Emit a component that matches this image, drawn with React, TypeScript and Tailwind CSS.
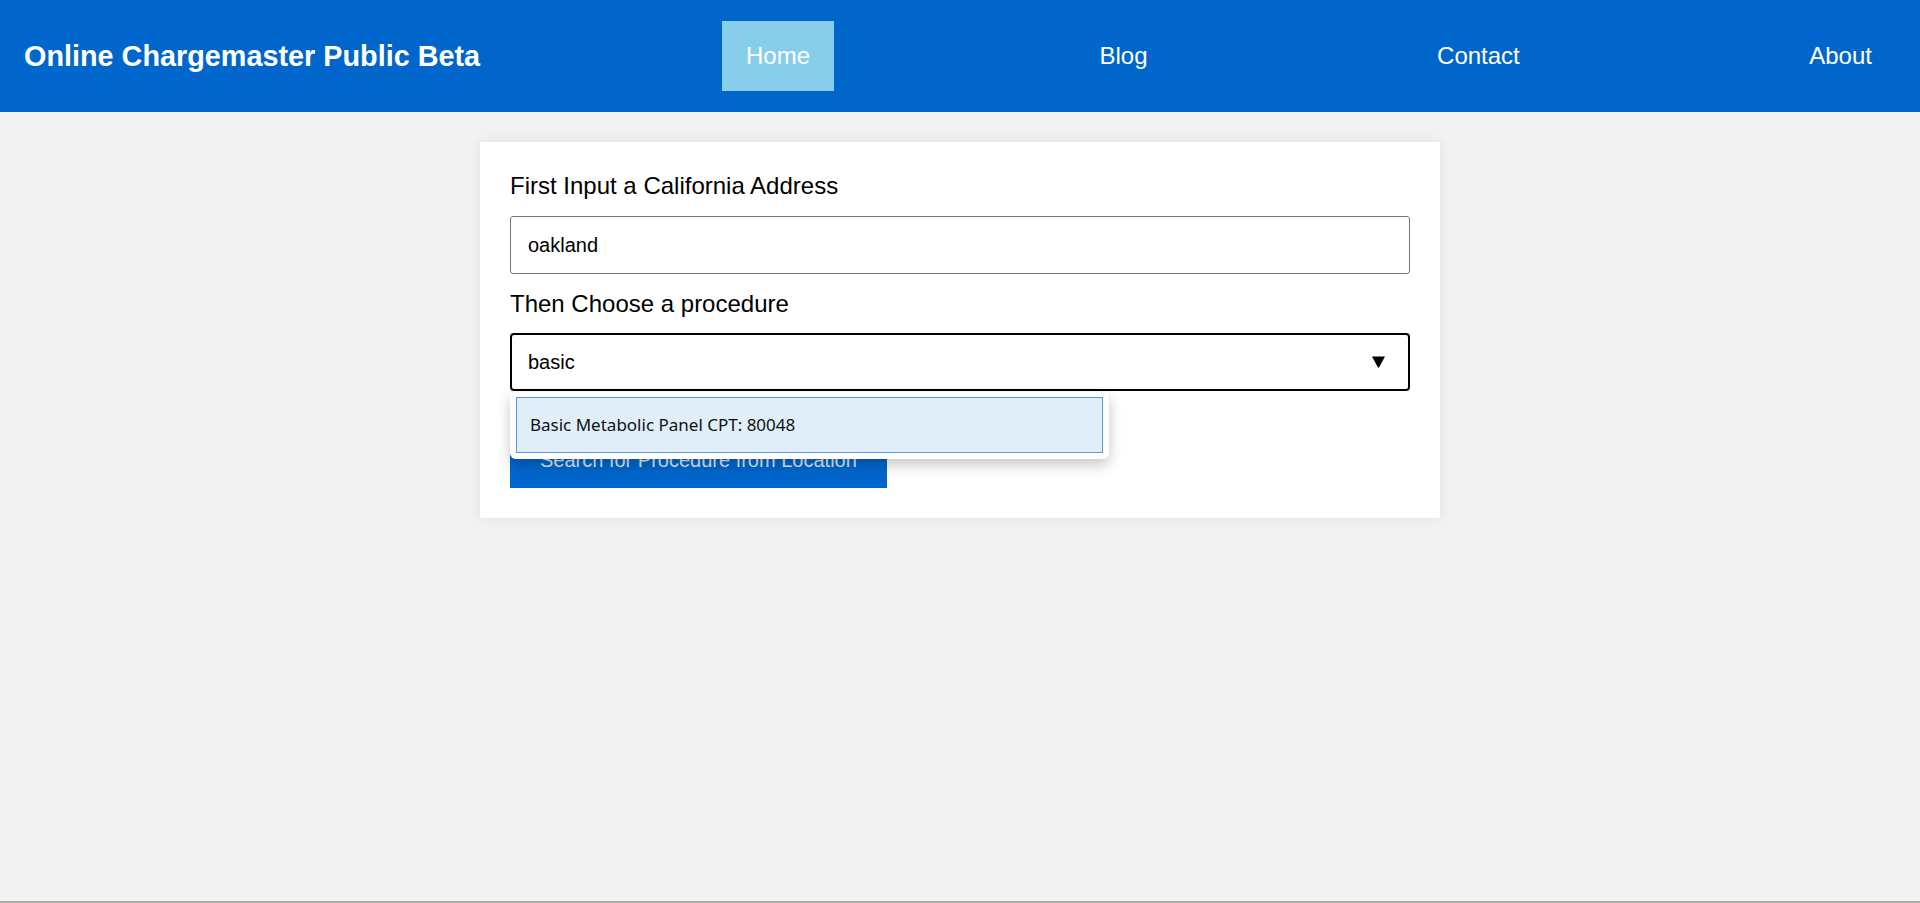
import { useState } from "react";

const navLinks = ["Home", "Blog", "Contact", "About"];

function Header() {
  return (
    <header className="flex h-[112px] items-center bg-[#0066cc] px-6 font-['Liberation_Sans',Arial,sans-serif] text-white">
      <h1 className="text-[28.8px] font-bold leading-[normal]">
        Online Chargemaster Public Beta
      </h1>
      <nav className="ml-auto flex w-[1174px] items-center justify-between">
        {navLinks.map((link) => (
          <a
            key={link}
            href="#"
            className={`flex h-[70px] items-center px-6 text-2xl leading-[normal] ${
              link === "Home" ? "bg-[#87ceeb]" : ""
            }`}
          >
            {link}
          </a>
        ))}
      </nav>
    </header>
  );
}

function SearchForm() {
  const [address, setAddress] = useState("oakland");
  const [procedure, setProcedure] = useState("basic");

  return (
    <div className="mx-auto mt-[30px] w-[960px] bg-white p-[30px] shadow-[0_0_12px_rgba(0,0,0,0.08)]">
      <label className="mb-4 block text-2xl leading-[normal] text-black">
        First Input a California Address
      </label>
      <input
        type="text"
        value={address}
        onChange={(e) => setAddress(e.target.value)}
        className="block h-[58px] w-full rounded-[3px] border border-[#767676] bg-white pl-[17px] font-['Liberation_Sans',Arial,sans-serif] text-xl text-black outline-none"
      />
      <label className="mb-[15px] mt-4 block text-2xl leading-[normal] text-black">
        Then Choose a procedure
      </label>
      <div className="relative">
        <div className="flex h-[58px] w-full items-center rounded-[4px] border-2 border-black bg-white pl-4 pr-[23px]">
          <input
            type="text"
            value={procedure}
            onChange={(e) => setProcedure(e.target.value)}
            className="h-full flex-1 bg-transparent font-['Liberation_Sans',Arial,sans-serif] text-xl text-black outline-none"
          />
          <svg width="13" height="12" viewBox="0 0 13 12" className="text-black">
            <path d="M0 0.5 H13 L7 11.5 Q6.5 12 6 11.5 Z" fill="currentColor" />
          </svg>
        </div>
        {/* datalist suggestions popup */}
        <div className="absolute left-0 top-[59px] z-10 w-[599px] rounded-b-[6px] bg-white p-[6px] pt-[5px] shadow-[0_6px_14px_rgba(0,0,0,0.22)]">
          <div className="flex h-[56px] items-center border border-[#5b9bd5] bg-[#e0eef9] pl-[13px] font-['Noto_Sans',sans-serif] text-[17px] text-[#111]">
            Basic Metabolic Panel CPT: 80048
          </div>
        </div>
      </div>
      <button className="mt-[42px] bg-[#0066cc] px-[30px] py-4 text-xl leading-[normal] text-[#dfe6ef]">
        Search for Procedure from Location
      </button>
    </div>
  );
}

export default function App() {
  return (
    <div className="flex min-h-screen flex-col bg-[#f2f2f2] font-['Liberation_Sans',Arial,sans-serif]">
      <Header />
      <main className="flex-1">
        <SearchForm />
      </main>
      <div className="h-[2px] bg-[#b3aea5]" />
    </div>
  );
}
